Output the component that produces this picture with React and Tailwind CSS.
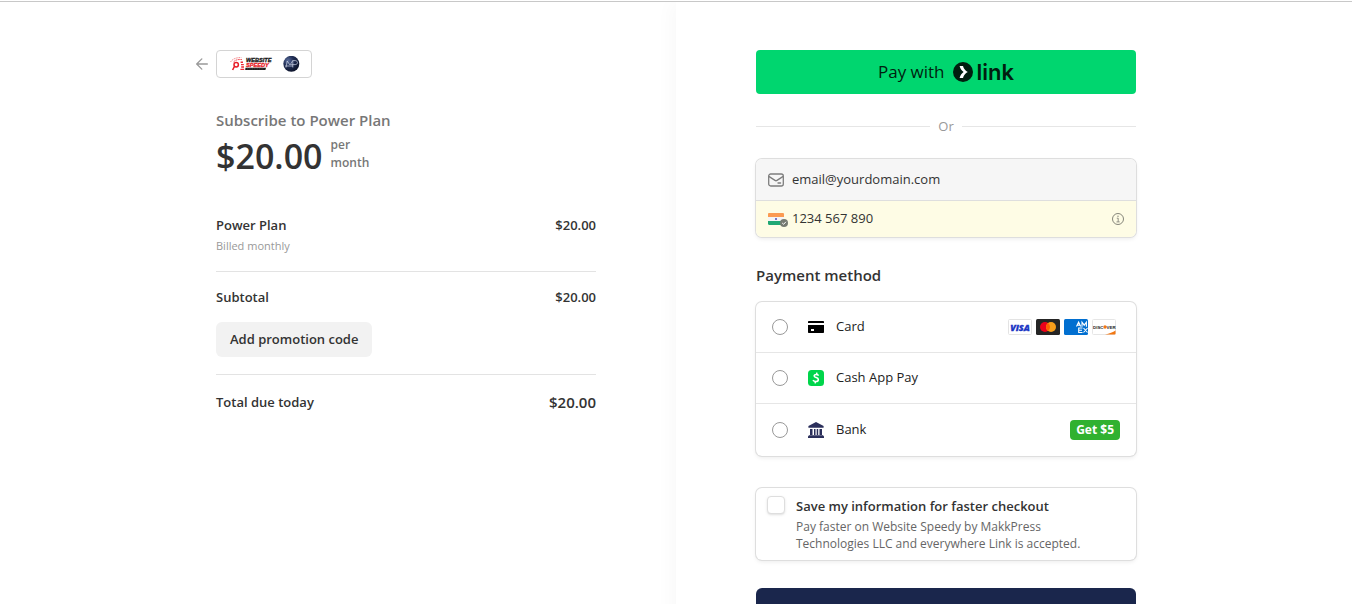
import React, { useState } from 'react'

const ArrowLeft = () => (
  <svg className="w-3 h-3" viewBox="0 0 12 12" fill="none" stroke="#999999" strokeWidth="1.3" strokeLinecap="round" strokeLinejoin="round">
    <path d="M5.8 .9.7 6l5.1 5.1M.8 6h10.6" />
  </svg>
)

const BrandLogo = () => (
  <svg className="w-[76px] h-4" viewBox="-3 0 76 16" aria-label="Website Speedy">
    <defs>
      <radialGradient id="globe" cx="0.3" cy="0.3" r="0.8">
        <stop offset="0" stopColor="#5a6d9c" />
        <stop offset="0.4" stopColor="#223058" />
        <stop offset="1" stopColor="#0a1024" />
      </radialGradient>
    </defs>
    <path d="M1.5 6C3.5 3 7 1.4 12.5 1.6" fill="none" stroke="#f58a8e" strokeWidth="1" strokeDasharray="1.6 .8" />
    <path d="M4.5 6C6 4 8.5 3.2 13 3.6" fill="none" stroke="#f0565d" strokeWidth="1" strokeDasharray="2 .6" />
    <circle cx="7.2" cy="8.8" r="2.2" fill="none" stroke="#e81c27" strokeWidth="1.5" />
    <path d="M5.4 10.5 3.6 14" stroke="#e81c27" strokeWidth="1.6" />
    <path d="M11.6 6.2H14M12 8.6h2.8M12.2 11H15M11.4 13.4h3.8" stroke="#ee2b34" strokeWidth="1.4" />
    <text x="17" y="6" fontFamily="Liberation Sans Narrow, Liberation Sans" fontSize="5.6" fontWeight="700" fontStyle="italic" fill="#161616" stroke="#161616" strokeWidth=".3">WEBSITE</text>
    <text x="17" y="11" fontFamily="Liberation Sans Narrow, Liberation Sans" fontSize="5.6" fontWeight="700" fontStyle="italic" fill="#e81c27" stroke="#e81c27" strokeWidth=".3">SPEEDY</text>
    <path d="M16.5 11.8h20.5l-.6 2.2H16.2z" fill="#1c1c1c" />
    <path d="M18 12.9h17" stroke="#777777" strokeWidth=".5" strokeDasharray="1 .7" />
    <circle cx="62.3" cy="7.8" r="8" fill="url(#globe)" />
    <path d="M57 11.5 58.2 5l2.8 4 2.8-4.5v7M63.8 4.6h2.4c3 0 3 4 0 4H62M56 10h8" fill="none" stroke="#cfd6e6" strokeWidth=".7" />
  </svg>
)

const LinkMark = () => (
  <svg className="w-5 h-5" viewBox="0 0 20 20">
    <circle cx="10" cy="10" r="10" fill="#011e0f" />
    <path d="M6.6 4h3.4c.7 2.7 2.4 4.9 4.8 6-2.4 1.1-4.1 3.3-4.8 6H6.600c.6-2.500 2-4.600 4-6-2-1.400-3.400-3.500-4-6Z" fill="#ffffff" />
  </svg>
)

const MailIcon = () => (
  <svg className="w-4 h-4" viewBox="0 0 16 16" fill="none" stroke="#7d7d7d" strokeWidth="1.3" strokeLinecap="round" strokeLinejoin="round">
    <rect x=".7" y="2" width="14.6" height="12" rx="2" />
    <path d="M1.2 4.6 7 8.4c.6.4 1.4.4 2 0l5.8-3.8" />
    <path d="M10 11h2.6" />
  </svg>
)

const FlagIcon = () => (
  <svg className="w-5 h-4" viewBox="0 0 20 16">
    <path d="M0 3.2C0 2.5.5 2 1.2 2h13.6c.7 0 1.2.5 1.2 1.2V6H0z" fill="#fb9a52" />
    <path d="M0 6h16v4H0z" fill="#f4f4f6" />
    <path d="M0 10h16v4H1.2C.5 14 0 13.5 0 12.8z" fill="#20a873" />
    <circle cx="8" cy="8" r="1.1" fill="#5a5ac0" />
    <circle cx="16" cy="12" r="4" fill="#767a72" />
    <path d="m14.2 12 1.4 1.3 2.3-2.5" fill="none" stroke="#ffffff" strokeWidth="1" />
  </svg>
)

const InfoIcon = () => (
  <svg className="w-3 h-3" viewBox="0 0 12 12" fill="none" stroke="#85857a">
    <circle cx="6" cy="6" r="5.5" />
    <path d="M4.8 5.2h1.4v3.6M4.500 8.900h3.200" strokeWidth=".9" />
    <circle cx="6" cy="3.3" r=".7" fill="#85857a" stroke="none" />
  </svg>
)

const CardIcon = () => (
  <svg className="w-4 h-4" viewBox="0 0 16 16">
    <path d="M0 3c0-.6.4-1 1-1h14c.6 0 1 .4 1 1v1H0zM0 6h16v7c0 .6-.4 1-1 1H1c-.6 0-1-.4-1-1z" fill="#000000" />
    <path d="M3 10h3v2H3z" fill="#ffffff" />
  </svg>
)

const CashAppIcon = () => (
  <svg className="w-4 h-4" viewBox="0 0 16 16">
    <rect width="16" height="16" rx="3.5" fill="#00d54b" />
    <path d="M10.7 5.5C9.9 4.8 9 4.5 8.100 4.500c-1 0-1.900.5-1.900 1.400 0 2 4.100 1.100 4.100 3.500 0 1.300-1.200 2.100-2.600 2.100-1.100 0-2.100-.4-2.800-1.200M8.900 2.700l-.4 1.800M7.500 11.500l-.4 1.800" fill="none" stroke="#ffffff" strokeWidth="1.6" />
  </svg>
)

const BankIcon = () => (
  <svg className="w-4 h-4" viewBox="0 0 16 16" fill="#2b2f5b">
    <path d="M8 0 15.6 4v1.800H.4V4zM2 7h2.500v6H2zM6 7h1.500v6H6zM8.700 7h1.500v6H8.700zM11.500 7H14v6h-2.500zM1 13.300h14L16 14.500V16H0v-1.500z" />
  </svg>
)

const CardBrands = () => (
  <div className="flex items-center gap-1 mr-1">
    <svg className="w-6 h-4" viewBox="0 0 24 16" aria-label="Visa">
      <rect x=".5" y=".5" width="23" height="15" rx="1" fill="#ffffff" stroke="#e3e3e3" />
      <text x="12" y="11.5" textAnchor="middle" fontFamily="Open Sans" fontSize="9" fontWeight="800" fontStyle="italic" fill="#1a35c4" stroke="#1a35c4" strokeWidth=".3">VISA</text>
    </svg>
    <svg className="w-6 h-4" viewBox="0 0 24 16" aria-label="Mastercard">
      <rect width="24" height="16" rx="1.5" fill="#252525" />
      <circle cx="9" cy="8" r="5" fill="#eb001b" />
      <circle cx="15" cy="8" r="5" fill="#f79e1b" />
      <path d="M12 4a5 5 0 0 1 0 8 5 5 0 0 1 0-8Z" fill="#ff5f00" />
    </svg>
    <svg className="w-6 h-4" viewBox="0 0 24 16" aria-label="American Express">
      <rect width="24" height="16" rx="1.5" fill="#016fd0" />
      <g fill="none" stroke="#ffffff" strokeWidth="1.1">
        <path d="M12.5 7.5 14.6 3l2.1 4.5M13.5 6.1h2.3M18 7.7V3.2l2.2 3 2.2-3v4.5" />
        <path d="M18.5 9h-3.8v4.5h3.8M14.7 11.2h3.3M19.5 9l4 4.5M23.5 9l-4 4.5" />
      </g>
    </svg>
    <svg className="w-6 h-4" viewBox="0 0 24 16" aria-label="Discover">
      <rect x=".5" y=".5" width="23" height="15" rx="1" fill="#ffffff" stroke="#e6e6e6" />
      <path d="M13 15.5c4.5-.8 8-2.2 10.5-4v3.2c0 .5-.3.8-.8.8z" fill="#f27712" />
      <text x="1" y="9.6" fontFamily="Liberation Sans" fontSize="4.4" fontWeight="700" fill="#222222">DISC</text>
      <circle cx="13" cy="8" r="1.7" fill="#f27712" />
      <text x="14.6" y="9.6" fontFamily="Liberation Sans" fontSize="4.4" fontWeight="700" fill="#222222">VER</text>
    </svg>
  </div>
)

const methods = [
  { id: 'card', label: 'Card', icon: CardIcon },
  { id: 'cashapp', label: 'Cash App Pay', icon: CashAppIcon },
  { id: 'bank', label: 'Bank', icon: BankIcon },
]

const OrderSummary = () => (
  <section className="w-full max-w-[400px] text-[#333333]">
    <div className="flex items-center gap-2">
      <a href="#back" aria-label="Back">
        <ArrowLeft />
      </a>
      <div className="flex items-center justify-center w-24 h-7 rounded-sm border border-[#d4d4d4] bg-white">
        <BrandLogo />
      </div>
    </div>

    <div className="pl-5">
      <h1 className="mt-8 text-[15px] leading-5 font-semibold text-[#777777]">Subscribe to Power Plan</h1>
      <div className="flex items-center gap-2 mt-1">
        <span className="text-[34px] leading-[44px] font-semibold">$20.00</span>
        <span className="w-12 pb-1 text-[12px] leading-[18px] font-semibold text-[#777777]">per month</span>
      </div>

      <div className="flex items-start justify-between mt-9 pt-px text-[13px] leading-5 font-semibold">
        <div>
          <p>Power Plan</p>
          <p className="mt-px text-[11px] font-normal text-[#999999]">Billed monthly</p>
        </div>
        <span>$20.00</span>
      </div>

      <div className="flex justify-between mt-[15px] pt-[15px] border-t border-[#e3e3e3] text-[13px] leading-5 font-semibold">
        <span>Subtotal</span>
        <span>$20.00</span>
      </div>
      <button className="block mt-[15px] px-[14px] h-[35px] rounded-md bg-[#f2f2f2] text-[13px] font-semibold">
        Add promotion code
      </button>

      <div className="flex justify-between mt-[17px] pt-[17px] border-t border-[#e3e3e3] leading-5 font-semibold">
        <span className="text-[13px]">Total due today</span>
        <span className="text-[15px]">$20.00</span>
      </div>
    </div>
  </section>
)

const PaymentForm = () => {
  const [email, setEmail] = useState('email@yourdomain.com')
  const [phone, setPhone] = useState('1234 567 890')
  const [method, setMethod] = useState('')
  const [save, setSave] = useState(false)

  return (
    <form className="w-full max-w-[380px] text-[#333333]">
      <button type="button" className="flex items-center justify-center w-full h-11 rounded bg-[#00d66f] text-[#011e0f]">
        <span className="text-[17px] font-medium mr-2">Pay with</span>
        <LinkMark />
        <span className="ml-1 text-[22px] leading-6 font-semibold font-['Inter',sans-serif]">link</span>
      </button>

      <div className="flex items-center gap-2 mt-[22px] text-[13px] leading-5 text-[#999999]">
        <span className="flex-1 h-px bg-[#e6e6e6]" />
        Or
        <span className="flex-1 h-px bg-[#e6e6e6]" />
      </div>

      <div className="mt-[23px] rounded-md overflow-hidden ring-1 ring-[#dedede] shadow-[0_2px_4px_rgba(0,0,0,0.08)] text-[13px]">
        <label className="flex items-center gap-2 px-3 h-[42px] bg-[#f6f6f6] border-b border-[#dedede]">
          <MailIcon />
          <input type="email" aria-label="Email" value={email} onChange={(e) => setEmail(e.target.value)} className="flex-1 outline-none" />
        </label>
        <label className="flex items-center gap-1 px-3 h-9 bg-[#fefce5]">
          <FlagIcon />
          <input type="tel" aria-label="Phone" value={phone} onChange={(e) => setPhone(e.target.value)} className="flex-1 outline-none" />
          <InfoIcon />
        </label>
      </div>

      <h2 className="mt-7 text-[15px] leading-5 font-semibold">Payment method</h2>
      <div className="mt-[17px] rounded-md ring-1 ring-[#dedede] shadow-[0_2px_4px_rgba(0,0,0,0.08)] divide-y divide-[#e6e6e6]">
        {methods.map(({ id, label, icon: Icon }) => (
          <label key={id} className="flex items-center h-[51px] last:h-[52px] px-4 text-[13px] text-[#222222]">
            <input
              type="radio"
              name="method"
              checked={method === id}
              onChange={() => setMethod(id)}
              className="appearance-none w-4 h-4 rounded-full border border-[#999999] bg-white checked:border-4 checked:border-[#1a264c]"
            />
            <span className="ml-5 mr-3"><Icon /></span>
            <span className="flex-1">{label}</span>
            {id === 'card' && <CardBrands />}
            {id === 'bank' && (
              <span className="px-[6px] rounded bg-[#30b130] text-[12px] leading-5 font-bold text-white">Get $5</span>
            )}
          </label>
        ))}
      </div>

      <label className="flex gap-[11px] mt-8 px-[11px] py-2 rounded-md ring-1 ring-[#dedede] shadow-[0_2px_4px_rgba(0,0,0,0.08)]">
        <input
          type="checkbox"
          checked={save}
          onChange={(e) => setSave(e.target.checked)}
          className="appearance-none shrink-0 w-[18px] h-[18px] rounded-sm border border-[#dedede] bg-white shadow-sm checked:bg-[#1a264c]"
        />
        <span>
          <span className="block text-[13px] leading-5 font-semibold">Save my information for faster checkout</span>
          <span className="block max-w-[300px] mt-0.5 text-[12px] leading-[17px] text-[#666666]">
            Pay faster on Website Speedy by MakkPress Technologies LLC and everywhere Link is accepted.
          </span>
        </span>
      </label>

      <button type="submit" aria-label="Subscribe" className="block mt-7 w-full h-11 rounded-md bg-[#1a264c]" />
    </form>
  )
}

export default function App() {
  return (
    <div className="min-h-screen bg-white font-['Open_Sans','Noto_Sans',sans-serif]">
      <div className="pt-px">
        <div className="h-px bg-[#c8c8c8]" />
      </div>
      <main className="grid grid-cols-2 overflow-hidden">
        <div className="flex justify-end pt-12 pr-20 pl-5">
          <OrderSummary />
        </div>
        <div className="pt-12 pl-20 pr-5 bg-white shadow-[-4px_0_18px_rgba(0,0,0,0.03)]">
          <PaymentForm />
        </div>
      </main>
    </div>
  )
}
